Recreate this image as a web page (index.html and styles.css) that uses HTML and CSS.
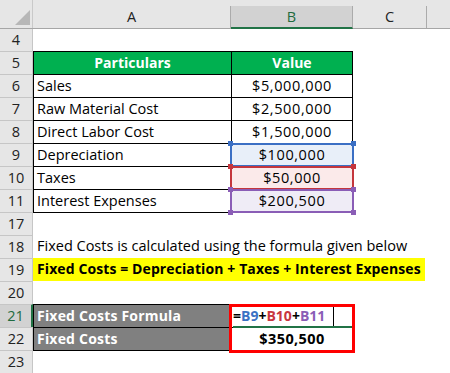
FILE: index.html
```html
<!DOCTYPE html>
<html>
<head>
<meta charset="utf-8">
<link rel="stylesheet" href="styles.css">
</head>
<body>
<div class="sheet">
  <div class="hdr">
    <div class="corner"><svg width="33" height="28" viewBox="0 0 33 28"><polygon points="30,10 30,25 15,25" fill="#b7b7b7"/></svg></div>
    <div class="ch">A</div>
    <div class="ch sel">B</div>
    <div class="ch">C</div>
    <div class="ch last"></div>
  </div>

  <div class="row r4"><div class="rh">4</div><div></div><div></div><div></div><div></div></div>
  <div class="row"><div class="rh">5</div><div class="c ta th">Particulars</div><div class="c tb th">Value</div><div></div><div></div></div>
  <div class="row"><div class="rh">6</div><div class="c ta">Sales</div><div class="c tb num">$5,000,000</div><div></div><div></div></div>
  <div class="row"><div class="rh">7</div><div class="c ta">Raw Material Cost</div><div class="c tb num">$2,500,000</div><div></div><div></div></div>
  <div class="row"><div class="rh">8</div><div class="c ta">Direct Labor Cost</div><div class="c tb num">$1,500,000</div><div></div><div></div></div>
  <div class="row"><div class="rh">9</div><div class="c ta">Depreciation</div><div class="c tb num ref blue"><span class="box"></span><i class="h tl"></i><i class="h tr"></i><i class="h bl"></i><i class="h br"></i><span class="v">$100,000</span></div><div></div><div></div></div>
  <div class="row"><div class="rh">10</div><div class="c ta">Taxes</div><div class="c tb num ref red"><span class="box"></span><i class="h tl"></i><i class="h tr"></i><i class="h bl"></i><i class="h br"></i><span class="v">$50,000</span></div><div></div><div></div></div>
  <div class="row"><div class="rh">11</div><div class="c ta">Interest Expenses</div><div class="c tb num ref purple"><span class="box"></span><i class="h tl"></i><i class="h tr"></i><i class="h bl"></i><i class="h br"></i><span class="v">$200,500</span></div><div></div><div></div></div>
  <div class="row"><div class="rh">17</div><div class="c close"></div><div class="c close"></div><div></div><div></div></div>
  <div class="row"><div class="rh">18</div><div class="c span">Fixed Costs is calculated using the formula given below</div><div></div></div>
  <div class="row"><div class="rh">19</div><div class="c span yellow">Fixed Costs = Depreciation + Taxes + Interest Expenses</div><div></div></div>
  <div class="row"><div class="rh">20</div><div></div><div></div><div></div><div></div></div>
  <div class="row"><div class="rh rsel">21</div><div class="c ta gray">Fixed Costs Formula</div><div class="c tb formula"><span class="redbox"></span><span class="fx"><span class="k">=</span><span class="fb">B9</span><span class="k">+</span><span class="fr">B10</span><span class="k">+</span><span class="fp">B11</span></span><span class="cursor"></span><span class="act"></span></div><div></div><div></div></div>
  <div class="row"><div class="rh">22</div><div class="c ta gray">Fixed Costs</div><div class="c tb num bold">$350,500</div><div></div><div></div></div>
  <div class="row"><div class="rh">23</div><div class="c close"></div><div class="c close"></div><div></div><div></div></div>
</div>
</body>
</html>
```
FILE: styles.css
```css
html, body {
  margin: 0;
  padding: 0;
  background: #fff;
}
body {
  font-family: "Open Sans", Lato, "Liberation Sans", sans-serif;
  font-size: 14.5px;
  color: #000;
  width: 450px;
  height: 373px;
  overflow: hidden;
}
.sheet {
  width: 450px;
}
.hdr, .row {
  display: grid;
  grid-template-columns: 33px 198px 122px 74px 23px;
}
.hdr {
  height: 29px;
  background: #e6e6e6;
  box-sizing: border-box;
  border-bottom: 1px solid #a6a6a6;
  padding-top: 6px;
}
.corner {
  margin-top: -6px;
  height: 28px;
  border-right: 1px solid #c9c9c9;
  box-sizing: border-box;
}
.corner svg { display: block; }
.ch {
  box-sizing: border-box;
  border-right: 1px solid #ababab;
  text-align: center;
  line-height: 21px;
  color: #222;
}
.ch.last { border-right: none; }
.ch.sel {
  background: #d2d2d2;
  color: #1f6b3f;
  border-bottom: 2px solid #217346;
  margin-bottom: -1px;
  line-height: 21px;
}
.row {
  height: 23px;
}
.row.r4 { height: 22px; }
.rh {
  background: #e6e6e6;
  box-sizing: border-box;
  border-top: 1px solid #c6c6c6;
  border-right: 1px solid #c6c6c6;
  text-align: center;
  line-height: 22px;
  color: #222;
}
.r4 .rh { border-top: none; line-height: 22px; }
.rh.rsel {
  background: #d2d2d2;
  color: #1f6b3f;
  border-right: 2px solid #217346;
}
.c {
  box-sizing: border-box;
  line-height: 22px;
  white-space: nowrap;
  padding-left: 3px;
}
.ta {
  border-top: 1px solid #000;
  border-left: 1px solid #000;
}
.tb {
  border-top: 1px solid #000;
  border-left: 1px solid #000;
  border-right: 1px solid #000;
}
.close {
  border-top: 1px solid #000;
}
.close + .close {
  margin-left: -1px;
}
.th {
  background: #00b050;
  color: #fff;
  font-weight: bold;
  font-size: 14px;
  text-align: center;
  padding-left: 0;
}
.num {
  text-align: center;
  padding-left: 0;
  letter-spacing: 0.6px;
}
.bold {
  font-weight: bold;
  letter-spacing: 0.4px;
}
.ref {
  position: relative;
}
.ref .v { position: relative; z-index: 1; }
.ref .box {
  position: absolute;
  left: -2px;
  right: -2px;
  top: -1px;
  bottom: -1px;
  border: 2px solid;
  box-sizing: border-box;
}
.ref .h {
  position: absolute;
  width: 5px;
  height: 5px;
  z-index: 2;
}
.h.tl { left: -4px; top: -3px; }
.h.tr { right: -4px; top: -3px; }
.h.bl { left: -4px; bottom: -3px; }
.h.br { right: -4px; bottom: -3px; }
.blue { background: #e8eff9; }
.blue .box { border-color: #3b6fc4; }
.blue .h { background: #3b6fc4; }
.red { background: #fbeaea; }
.red .box { border-color: #c4363d; }
.red .h { background: #c4363d; }
.purple { background: #efecf6; }
.purple .box { border-color: #8a5db6; }
.purple .h { background: #8a5db6; }
.span {
  grid-column: 2 / 5;
  padding-left: 4px;
}
.yellow {
  background: #ffff00;
  font-weight: bold;
  font-size: 14px;
  letter-spacing: 0.1px;
  margin-right: 2px;
}
.gray {
  background: #808080;
  color: #fff;
  font-weight: bold;
  font-size: 14px;
  letter-spacing: 0.2px;
}
.formula {
  position: relative;
  font-weight: bold;
  font-size: 14px;
  padding-left: 1px;
}
.fx .k { color: #000; }
.fb { color: #3b72c4; }
.fr { color: #c8363f; }
.fp { color: #8a5db6; }
.cursor {
  position: absolute;
  left: 101px;
  top: 2px;
  width: 1px;
  height: 19px;
  background: #000;
}
.act {
  position: absolute;
  left: 1px;
  right: 0;
  bottom: -1px;
  height: 2px;
  background: #217346;
  z-index: 2;
}
.redbox {
  position: absolute;
  left: -3px;
  top: -1px;
  width: 126px;
  height: 49px;
  border: 3px solid #ff0000;
  box-sizing: border-box;
  z-index: 3;
}
```
